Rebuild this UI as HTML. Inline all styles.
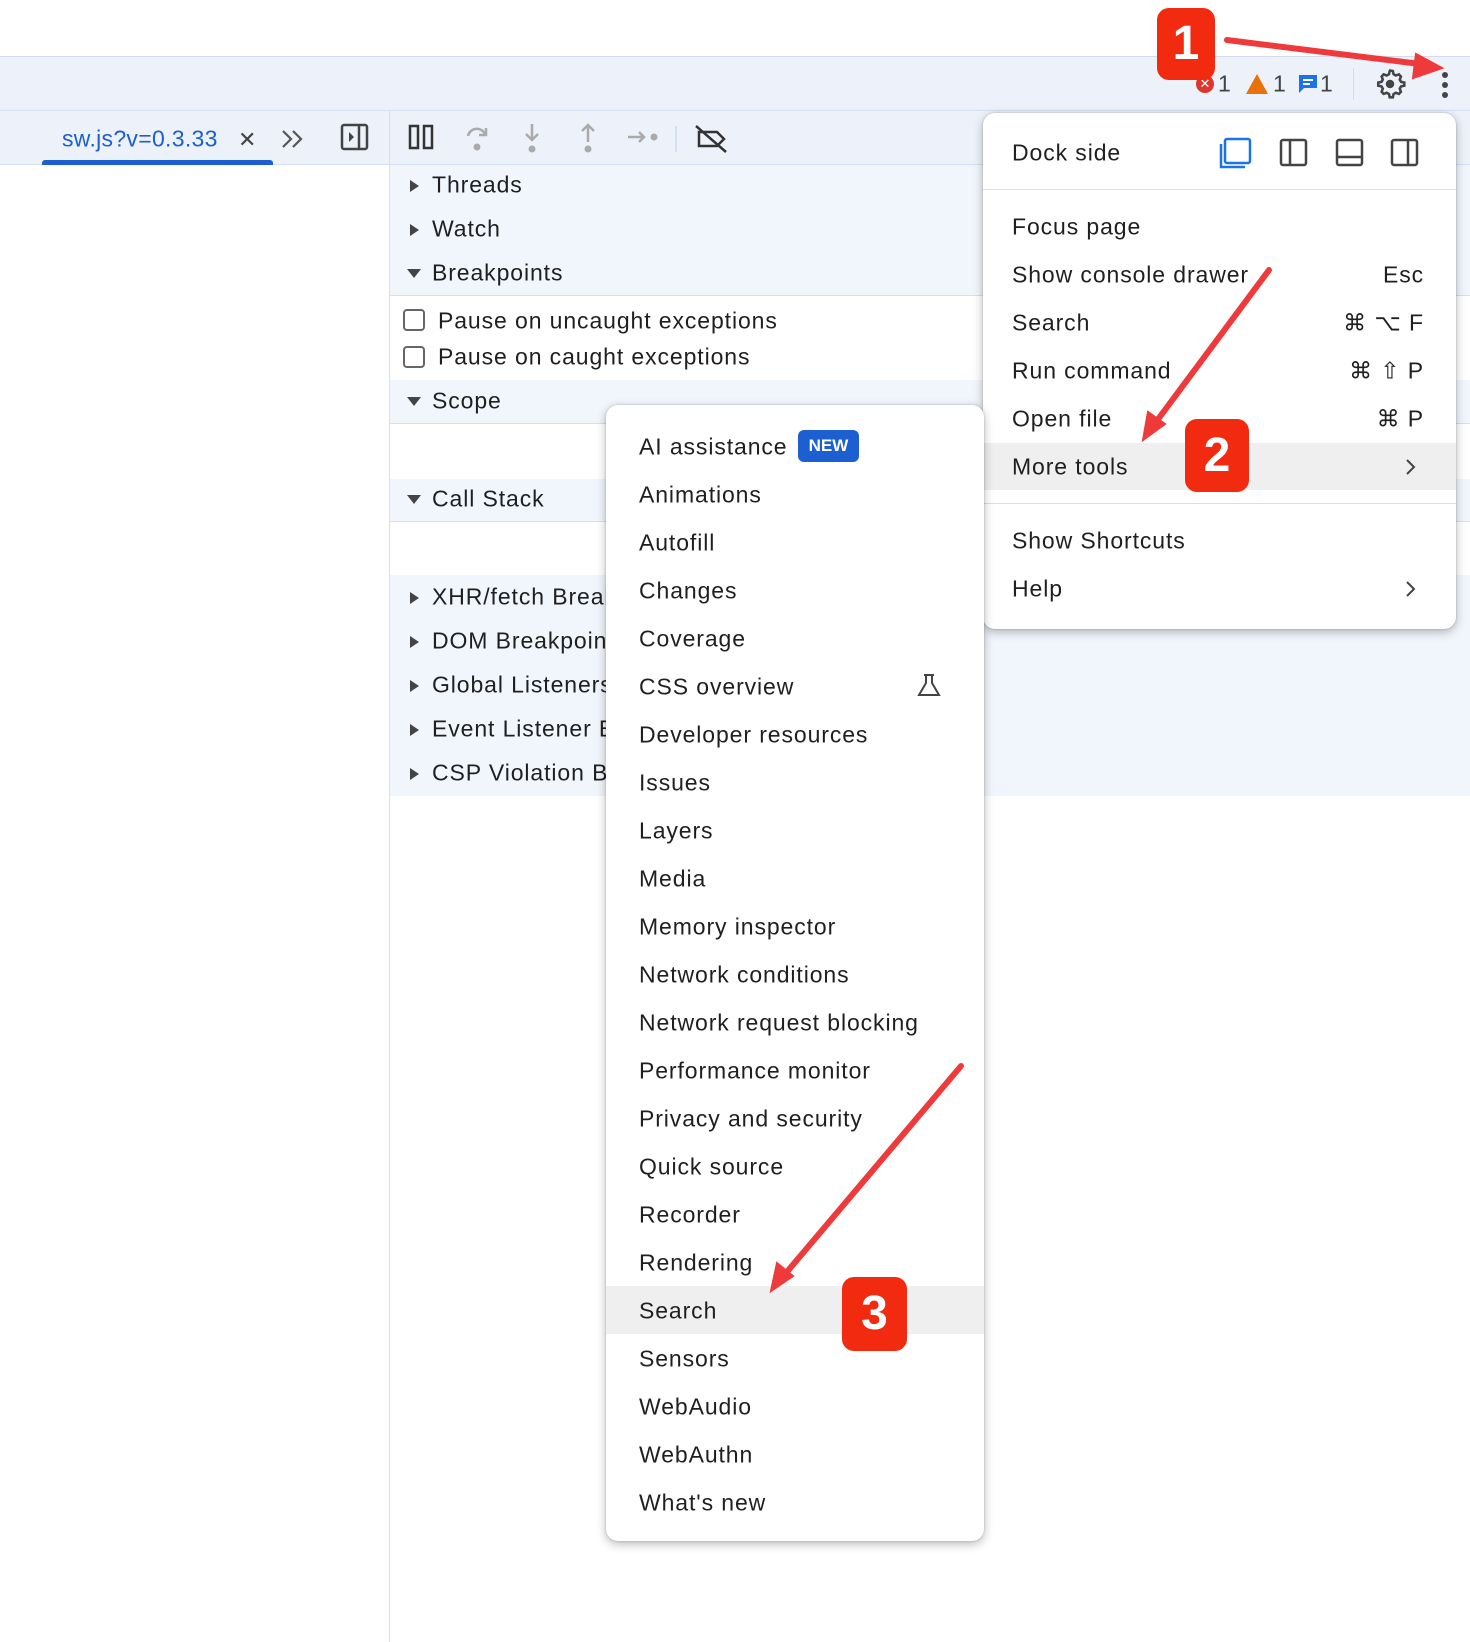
<!DOCTYPE html>
<html><head><meta charset="utf-8"><style>
*{box-sizing:border-box;margin:0;padding:0}
body{width:1470px;height:1642px;position:relative;overflow:hidden;background:#fff;font-family:"Liberation Sans",sans-serif;color:#1f1f1f;font-size:23px;letter-spacing:0.9px}
.a{position:absolute}
.t{position:absolute;white-space:nowrap;line-height:1;transform:translateY(-50%)}
.tri{position:absolute;width:0;height:0}
.r{border-top:6px solid transparent;border-bottom:6px solid transparent;border-left:9px solid #444}
.d{border-left:7px solid transparent;border-right:7px solid transparent;border-top:9px solid #444}
.cb{position:absolute;width:22px;height:22px;border:2px solid #666;border-radius:4px;background:#fff}
.menu{position:absolute;background:#fff;border-radius:12px;box-shadow:0 3px 10px rgba(0,0,0,.28),0 0 2px rgba(0,0,0,.2)}
.badge{position:absolute;background:#f22a0f;border-radius:12px;color:#fff;font-size:48px;font-weight:bold;text-align:center;letter-spacing:0}
</style></head><body>
<div class="a" style="left:0;top:56px;width:1470px;height:1px;background:#d3dcea"></div>
<div class="a" style="left:0;top:57px;width:1470px;height:53px;background:#edf2fa"></div>
<div class="a" style="left:0;top:110px;width:1470px;height:1px;background:#d3e0f5"></div>
<div class="a" style="left:0;top:111px;width:1470px;height:53px;background:#edf2fa"></div>
<div class="a" style="left:0;top:164px;width:1470px;height:1px;background:#d3e0f5"></div>
<div class="t" style="left:62px;top:139px;color:#1b5fd0;font-size:23px;letter-spacing:0.3px">sw.js?v=0.3.33</div>
<div class="t" style="left:238px;top:140px;font-size:22px;color:#444">✕</div>
<div class="a" style="left:42px;top:160px;width:231px;height:5px;background:#1b5fd0;border-radius:3px 3px 0 0"></div>
<svg class="a" style="left:280px;top:128px" width="28" height="22" viewBox="0 0 28 22"><path d="M3 3l8 8-8 8M13 3l8 8-8 8" fill="none" stroke="#555" stroke-width="2.2"/></svg>
<svg class="a" style="left:340px;top:122px" width="30" height="30" viewBox="0 0 30 30"><rect x="2" y="3" width="25" height="24" rx="2" fill="none" stroke="#444" stroke-width="2.5"/><line x1="19" y1="3" x2="19" y2="27" stroke="#444" stroke-width="2.5"/><path d="M9 10l5 5-5 5z" fill="#444"/></svg>
<svg class="a" style="left:408px;top:122px" width="330" height="34" viewBox="0 0 330 34">
<rect x="2" y="4" width="8" height="22" fill="none" stroke="#333" stroke-width="2.5"/><rect x="16" y="4" width="8" height="22" fill="none" stroke="#333" stroke-width="2.5"/>
<g stroke="#aaa" stroke-width="2.5" fill="none"><path d="M60 14a9 9 0 0 1 17-2"/><path d="M78 6v7h-7"/></g><circle cx="69" cy="25" r="3.5" fill="#aaa"/>
<g stroke="#aaa" stroke-width="2.5" fill="none"><path d="M124 2v16M118 12l6 6 6-6"/></g><circle cx="124" cy="27" r="3.5" fill="#aaa"/>
<g stroke="#aaa" stroke-width="2.5" fill="none"><path d="M180 20V3M174 9l6-6 6 6"/></g><circle cx="180" cy="27" r="3.5" fill="#aaa"/>
<g stroke="#aaa" stroke-width="2.5" fill="none"><path d="M220 15h16M231 10l5 5-5 5"/></g><circle cx="246" cy="15" r="3.5" fill="#aaa"/>
<line x1="268" y1="4" x2="268" y2="30" stroke="#d3e0f5" stroke-width="2"/>
<g stroke="#333" stroke-width="2.5" fill="none"><path d="M291 10h18l7 7-7 7h-18z"/><path d="M288 4l30 26"/></g>
</svg>
<div class="a" style="left:1196px;top:75px;width:18px;height:18px;border-radius:50%;background:#dc362e;color:#fff;font-size:13px;text-align:center;line-height:18px;letter-spacing:0">✕</div>
<div class="t" style="left:1218px;top:84px;color:#444">1</div>
<svg class="a" style="left:1245px;top:73px" width="24" height="22"><path d="M12 1L23 21H1z" fill="#e8710a"/></svg>
<div class="t" style="left:1273px;top:84px;color:#444">1</div>
<svg class="a" style="left:1298px;top:74px" width="20" height="20"><path d="M1 1h18v13H6l-5 5z" fill="#1a73e8"/><path d="M5 6h10M5 10h7" stroke="#fff" stroke-width="2"/></svg>
<div class="t" style="left:1320px;top:84px;color:#444">1</div>
<div class="a" style="left:1353px;top:68px;width:1px;height:32px;background:#d3dcea"></div>
<svg class="a" style="left:1373px;top:67px" width="34" height="34" viewBox="0 0 24 24"><path fill="none" stroke="#444" stroke-width="1.8" d="M12 2.5l2 .3.5 2.3 1.6.9 2.2-.8 1.4 1.5-.8 2.2.9 1.6 2.3.5v2.2l-2.3.5-.9 1.6.8 2.2-1.4 1.5-2.2-.8-1.6.9-.5 2.3h-2.2l-.5-2.3-1.6-.9-2.2.8-1.4-1.5.8-2.2-.9-1.6-2.3-.5v-2.2l2.3-.5.9-1.6-.8-2.2 1.4-1.5 2.2.8 1.6-.9.5-2.3z"/><circle cx="12" cy="12" r="3" fill="#444"/></svg>
<div class="a" style="left:1442px;top:72px;width:6px;height:6px;border-radius:50%;background:#444"></div>
<div class="a" style="left:1442px;top:82px;width:6px;height:6px;border-radius:50%;background:#444"></div>
<div class="a" style="left:1442px;top:92px;width:6px;height:6px;border-radius:50%;background:#444"></div>
<div class="a" style="left:389px;top:111px;width:1px;height:1531px;background:#d3e0f5"></div>
<div class="a" style="left:390px;top:165px;width:1080px;height:130px;background:#f1f5fc"></div>
<div class="a" style="left:390px;top:295px;width:1080px;height:1px;background:#d3e0f5"></div>
<div class="a" style="left:390px;top:380px;width:1080px;height:43px;background:#f1f5fc"></div>
<div class="a" style="left:390px;top:423px;width:1080px;height:1px;background:#d3e0f5"></div>
<div class="a" style="left:390px;top:479px;width:1080px;height:42px;background:#f1f5fc"></div>
<div class="a" style="left:390px;top:521px;width:1080px;height:1px;background:#d3e0f5"></div>
<div class="a" style="left:390px;top:575px;width:1080px;height:221px;background:#f1f5fc"></div>
<div class="tri r" style="left:410px;top:180px"></div><div class="t" style="left:432px;top:185px">Threads</div>
<div class="tri r" style="left:410px;top:224px"></div><div class="t" style="left:432px;top:229px">Watch</div>
<div class="tri d" style="left:407px;top:269px"></div><div class="t" style="left:432px;top:273px">Breakpoints</div>
<div class="cb" style="left:403px;top:309px"></div><div class="t" style="left:438px;top:321px">Pause on uncaught exceptions</div>
<div class="cb" style="left:403px;top:346px"></div><div class="t" style="left:438px;top:357px">Pause on caught exceptions</div>
<div class="tri d" style="left:407px;top:397px"></div><div class="t" style="left:432px;top:401px">Scope</div>
<div class="tri d" style="left:407px;top:495px"></div><div class="t" style="left:432px;top:499px">Call Stack</div>
<div class="tri r" style="left:410px;top:592px"></div><div class="t" style="left:432px;top:597px">XHR/fetch Breakpoints</div>
<div class="tri r" style="left:410px;top:636px"></div><div class="t" style="left:432px;top:641px">DOM Breakpoints</div>
<div class="tri r" style="left:410px;top:680px"></div><div class="t" style="left:432px;top:685px">Global Listeners</div>
<div class="tri r" style="left:410px;top:724px"></div><div class="t" style="left:432px;top:729px">Event Listener Breakpoints</div>
<div class="tri r" style="left:410px;top:768px"></div><div class="t" style="left:432px;top:773px">CSP Violation Breakpoints</div>
<div class="menu" style="left:983px;top:113px;width:473px;height:516px;overflow:hidden">
<div class="t" style="left:29px;top:40px">Dock side</div>
<svg class="a" style="left:236px;top:23px" width="200" height="36" viewBox="0 0 200 36">
<rect x="6" y="3" width="25" height="24" rx="2" fill="none" stroke="#1a73e8" stroke-width="2.5"/><path d="M2 8v23h24" fill="none" stroke="#1a73e8" stroke-width="2.5"/>
<g fill="none" stroke="#444" stroke-width="2.5"><rect x="62" y="4" width="25" height="25" rx="2"/><line x1="71" y1="4" x2="71" y2="29"/>
<rect x="118" y="4" width="25" height="25" rx="2"/><line x1="118" y1="21" x2="143" y2="21"/>
<rect x="173" y="4" width="25" height="25" rx="2"/><line x1="189" y1="4" x2="189" y2="29"/></g></svg>
<div class="a" style="left:0;top:76px;width:473px;height:1px;background:#d3e0f5"></div>
<div class="t" style="left:29px;top:114px">Focus page</div>
<div class="t" style="left:29px;top:162px">Show console drawer</div><div class="t" style="right:32px;top:162px">Esc</div>
<div class="t" style="left:29px;top:210px">Search</div><div class="t" style="right:32px;top:210px">⌘ ⌥ F</div>
<div class="t" style="left:29px;top:258px">Run command</div><div class="t" style="right:32px;top:258px">⌘ ⇧ P</div>
<div class="t" style="left:29px;top:306px">Open file</div><div class="t" style="right:32px;top:306px">⌘ P</div>
<div class="a" style="left:0;top:330px;width:473px;height:47px;background:#efefef"></div>
<div class="t" style="left:29px;top:354px">More tools</div>
<svg class="a" style="left:421px;top:345px" width="14" height="18"><path d="M3 2l7 7-7 7" fill="none" stroke="#444" stroke-width="2"/></svg>
<div class="a" style="left:0;top:390px;width:473px;height:1px;background:#d3e0f5"></div>
<div class="t" style="left:29px;top:428px">Show Shortcuts</div>
<div class="t" style="left:29px;top:476px">Help</div>
<svg class="a" style="left:421px;top:467px" width="14" height="18"><path d="M3 2l7 7-7 7" fill="none" stroke="#444" stroke-width="2"/></svg>
</div>
<div class="menu" style="left:606px;top:405px;width:378px;height:1136px;overflow:hidden">
<div class="a" style="left:0;top:881px;width:378px;height:48px;background:#efefef"></div>
<div style="position:absolute;left:33px;top:42px">
<div class="t" style="left:0;top:0">AI assistance</div>
<div class="a" style="left:159px;top:-17px;width:61px;height:32px;background:#1b5fd0;border-radius:6px;color:#fff;font-weight:bold;font-size:17px;text-align:center;line-height:32px;letter-spacing:0">NEW</div>
<div class="t" style="left:0;top:48px">Animations</div>
<div class="t" style="left:0;top:96px">Autofill</div>
<div class="t" style="left:0;top:144px">Changes</div>
<div class="t" style="left:0;top:192px">Coverage</div>
<div class="t" style="left:0;top:240px">CSS overview</div>
<div class="t" style="left:0;top:288px">Developer resources</div>
<div class="t" style="left:0;top:336px">Issues</div>
<div class="t" style="left:0;top:384px">Layers</div>
<div class="t" style="left:0;top:432px">Media</div>
<div class="t" style="left:0;top:480px">Memory inspector</div>
<div class="t" style="left:0;top:528px">Network conditions</div>
<div class="t" style="left:0;top:576px">Network request blocking</div>
<div class="t" style="left:0;top:624px">Performance monitor</div>
<div class="t" style="left:0;top:672px">Privacy and security</div>
<div class="t" style="left:0;top:720px">Quick source</div>
<div class="t" style="left:0;top:768px">Recorder</div>
<div class="t" style="left:0;top:816px">Rendering</div>
<div class="t" style="left:0;top:864px">Search</div>
<div class="t" style="left:0;top:912px">Sensors</div>
<div class="t" style="left:0;top:960px">WebAudio</div>
<div class="t" style="left:0;top:1008px">WebAuthn</div>
<div class="t" style="left:0;top:1056px">What's new</div>
</div>
<svg class="a" style="left:310px;top:268px" width="26" height="26" viewBox="0 0 26 26"><path d="M8 2h10M10 2v8L3 22h20L16 10V2" fill="none" stroke="#444" stroke-width="2"/></svg>
</div>
<svg class="a" style="left:0;top:0" width="1470" height="1642">
<g stroke="#ee3a3a" stroke-width="6" fill="#ee3a3a" stroke-linecap="round">
<line x1="1227" y1="40" x2="1420" y2="64"/><path d="M1442 68l-26-14-3 24z" stroke-width="2"/>
<line x1="1269" y1="270" x2="1156" y2="422"/><path d="M1143 440l5-28 17 12z" stroke-width="2"/>
<line x1="961" y1="1066" x2="786" y2="1273"/><path d="M771 1291l6-28 16 13z" stroke-width="2"/>
</g></svg>
<div class="badge" style="left:1157px;top:8px;width:58px;height:72px;line-height:72px">1</div>
<div class="badge" style="left:1185px;top:419px;width:64px;height:73px;line-height:73px">2</div>
<div class="badge" style="left:842px;top:1277px;width:65px;height:74px;line-height:74px">3</div>
</body></html>
